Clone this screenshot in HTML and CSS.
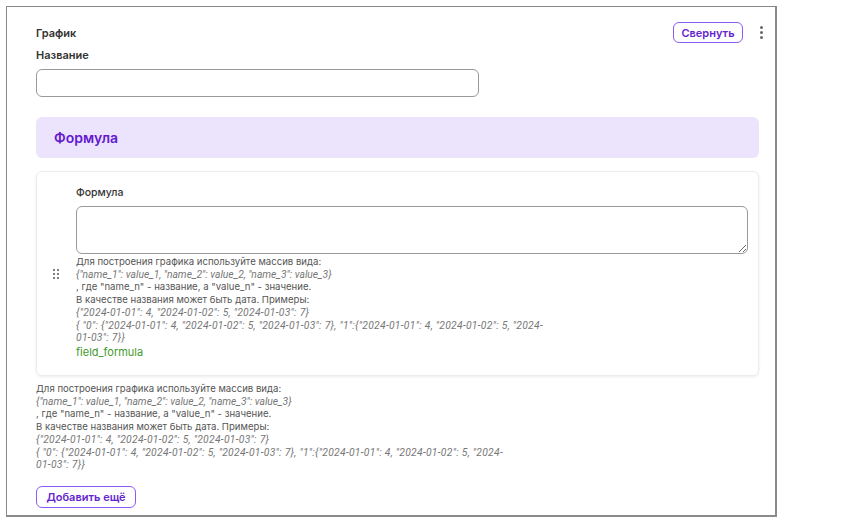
FILE: index.html
```html
<!DOCTYPE html>
<html lang="ru">
<head>
<meta charset="utf-8">
<link rel="stylesheet" href="styles.css">
</head>
<body>
<div class="frame">
  <div class="head">
    <span class="title">График</span>
    <div class="actions">
      <button class="btn collapse">Свернуть</button>
      <span class="kebab"><i></i><i></i><i></i></span>
    </div>
  </div>
  <div class="label">Название</div>
  <input class="input" type="text">
  <div class="section">Формула</div>
  <div class="card">
    <div class="handle">
      <svg width="6" height="10" viewBox="0 0 6 10"><g fill="#555"><circle cx="1" cy="1" r="1"/><circle cx="5" cy="1" r="1"/><circle cx="1" cy="5" r="1"/><circle cx="5" cy="5" r="1"/><circle cx="1" cy="9" r="1"/><circle cx="5" cy="9" r="1"/></g></svg>
    </div>
    <div class="card-body">
      <div class="sublabel">Формула</div>
      <textarea class="textarea"></textarea>
      <div class="help">
        <div>Для построения графика используйте массив вида:</div>
        <div class="em">{"name_1": value_1, "name_2": value_2, "name_3": value_3}</div>
        <div>, где "name_n" - название, а "value_n" - значение.</div>
        <div>В качестве названия может быть дата. Примеры:</div>
        <div class="em num">{"2024-01-01": 4, "2024-01-02": 5, "2024-01-03": 7}</div>
        <div class="em num">{ "0": {"2024-01-01": 4, "2024-01-02": 5, "2024-01-03": 7}, "1":{"2024-01-01": 4, "2024-01-02": 5, "2024-<br>01-03": 7}}</div>
      </div>
      <div class="field">field_formula</div>
    </div>
  </div>
  <div class="help outer">
    <div>Для построения графика используйте массив вида:</div>
    <div class="em">{"name_1": value_1, "name_2": value_2, "name_3": value_3}</div>
    <div>, где "name_n" - название, а "value_n" - значение.</div>
    <div>В качестве названия может быть дата. Примеры:</div>
    <div class="em num">{"2024-01-01": 4, "2024-01-02": 5, "2024-01-03": 7}</div>
    <div class="em num">{ "0": {"2024-01-01": 4, "2024-01-02": 5, "2024-01-03": 7}, "1":{"2024-01-01": 4, "2024-01-02": 5, "2024-<br>01-03": 7}}</div>
  </div>
  <button class="btn add">Добавить ещё</button>
</div>
</body>
</html>
```
FILE: styles.css
```css
* { box-sizing: border-box; }
html, body { margin: 0; padding: 0; background: #fff; }
body {
  font-family: Inter, "Noto Sans", sans-serif;
  color: #333;
  padding: 6px 0 0 6px;
}
.frame {
  width: 771px;
  height: 511px;
  border: 1px solid #8a8a8a;
  border-right: 2px solid #8a8a8a;
  border-bottom: 2px solid #8a8a8a;
  padding: 15px 16px 0 29px;
  display: flex;
  flex-direction: column;
  align-items: flex-start;
}
.head {
  width: calc(100% + 5px);
  display: flex;
  justify-content: space-between;
  align-items: center;
  height: 21px;
}
.title { font-size: 11px; font-weight: 600; color: #333; }
.actions { display: flex; align-items: center; gap: 16px; }
.btn {
  font-family: inherit;
  background: #fff;
  border: 1px solid #8b5cf6;
  border-radius: 6px;
  color: #6425d0;
  font-weight: 600;
  font-size: 11px;
  padding: 0;
  cursor: pointer;
}
.collapse { width: 70px; height: 21px; }
.kebab { display: flex; flex-direction: column; gap: 2px; width: 5px; align-items: center; }
.kebab i { display: block; width: 3px; height: 3px; border-radius: 50%; background: #666; }
.label { font-size: 11px; font-weight: 600; margin-top: 5px; line-height: 14px; color: #333; }
.input {
  margin-top: 7px;
  width: 443px;
  height: 28px;
  border: 1px solid #999;
  border-radius: 6px;
  background: #fff;
}
.section {
  margin-top: 20px;
  width: 723px;
  height: 41px;
  background: #ece4fd;
  border-radius: 6px;
  padding-left: 18px;
  display: flex;
  align-items: center;
  font-size: 14px;
  font-weight: 600;
  color: #6419d0;
}
.card {
  margin-top: 13px;
  width: 723px;
  height: 205px;
  border: 1px solid #ececf0;
  border-radius: 6px;
  box-shadow: 0 1px 3px rgba(0,0,0,0.08);
  display: flex;
  padding: 14px 10px 0 15px;
}
.handle { width: 24px; padding-top: 83px; padding-left: 1px; }
.handle svg { display: block; }
.card-body { flex: 1; display: flex; flex-direction: column; }
.sublabel { font-size: 10.5px; font-weight: 500; line-height: 14px; color: #333; }
.textarea {
  margin-top: 6px;
  width: 100%;
  height: 48px;
  border: 1px solid #9a9a9a;
  border-radius: 6px;
  resize: vertical;
  font-family: inherit;
}
.help {
  margin-top: 2px;
  font-size: 9.6px;
  line-height: 12.7px;
  color: #555;
  max-width: 540px;
}
.help .em { font-family: Roboto, "Noto Sans", sans-serif; font-style: italic; font-size: 10.3px; color: #777; }
.help .em.num { letter-spacing: 0.3px; }
.field { font-size: 11px; line-height: 14px; color: #3f9a2f; }
.help.outer { margin-top: 7px; }
.add { margin-top: 14px; width: 100px; height: 22px; }
```
